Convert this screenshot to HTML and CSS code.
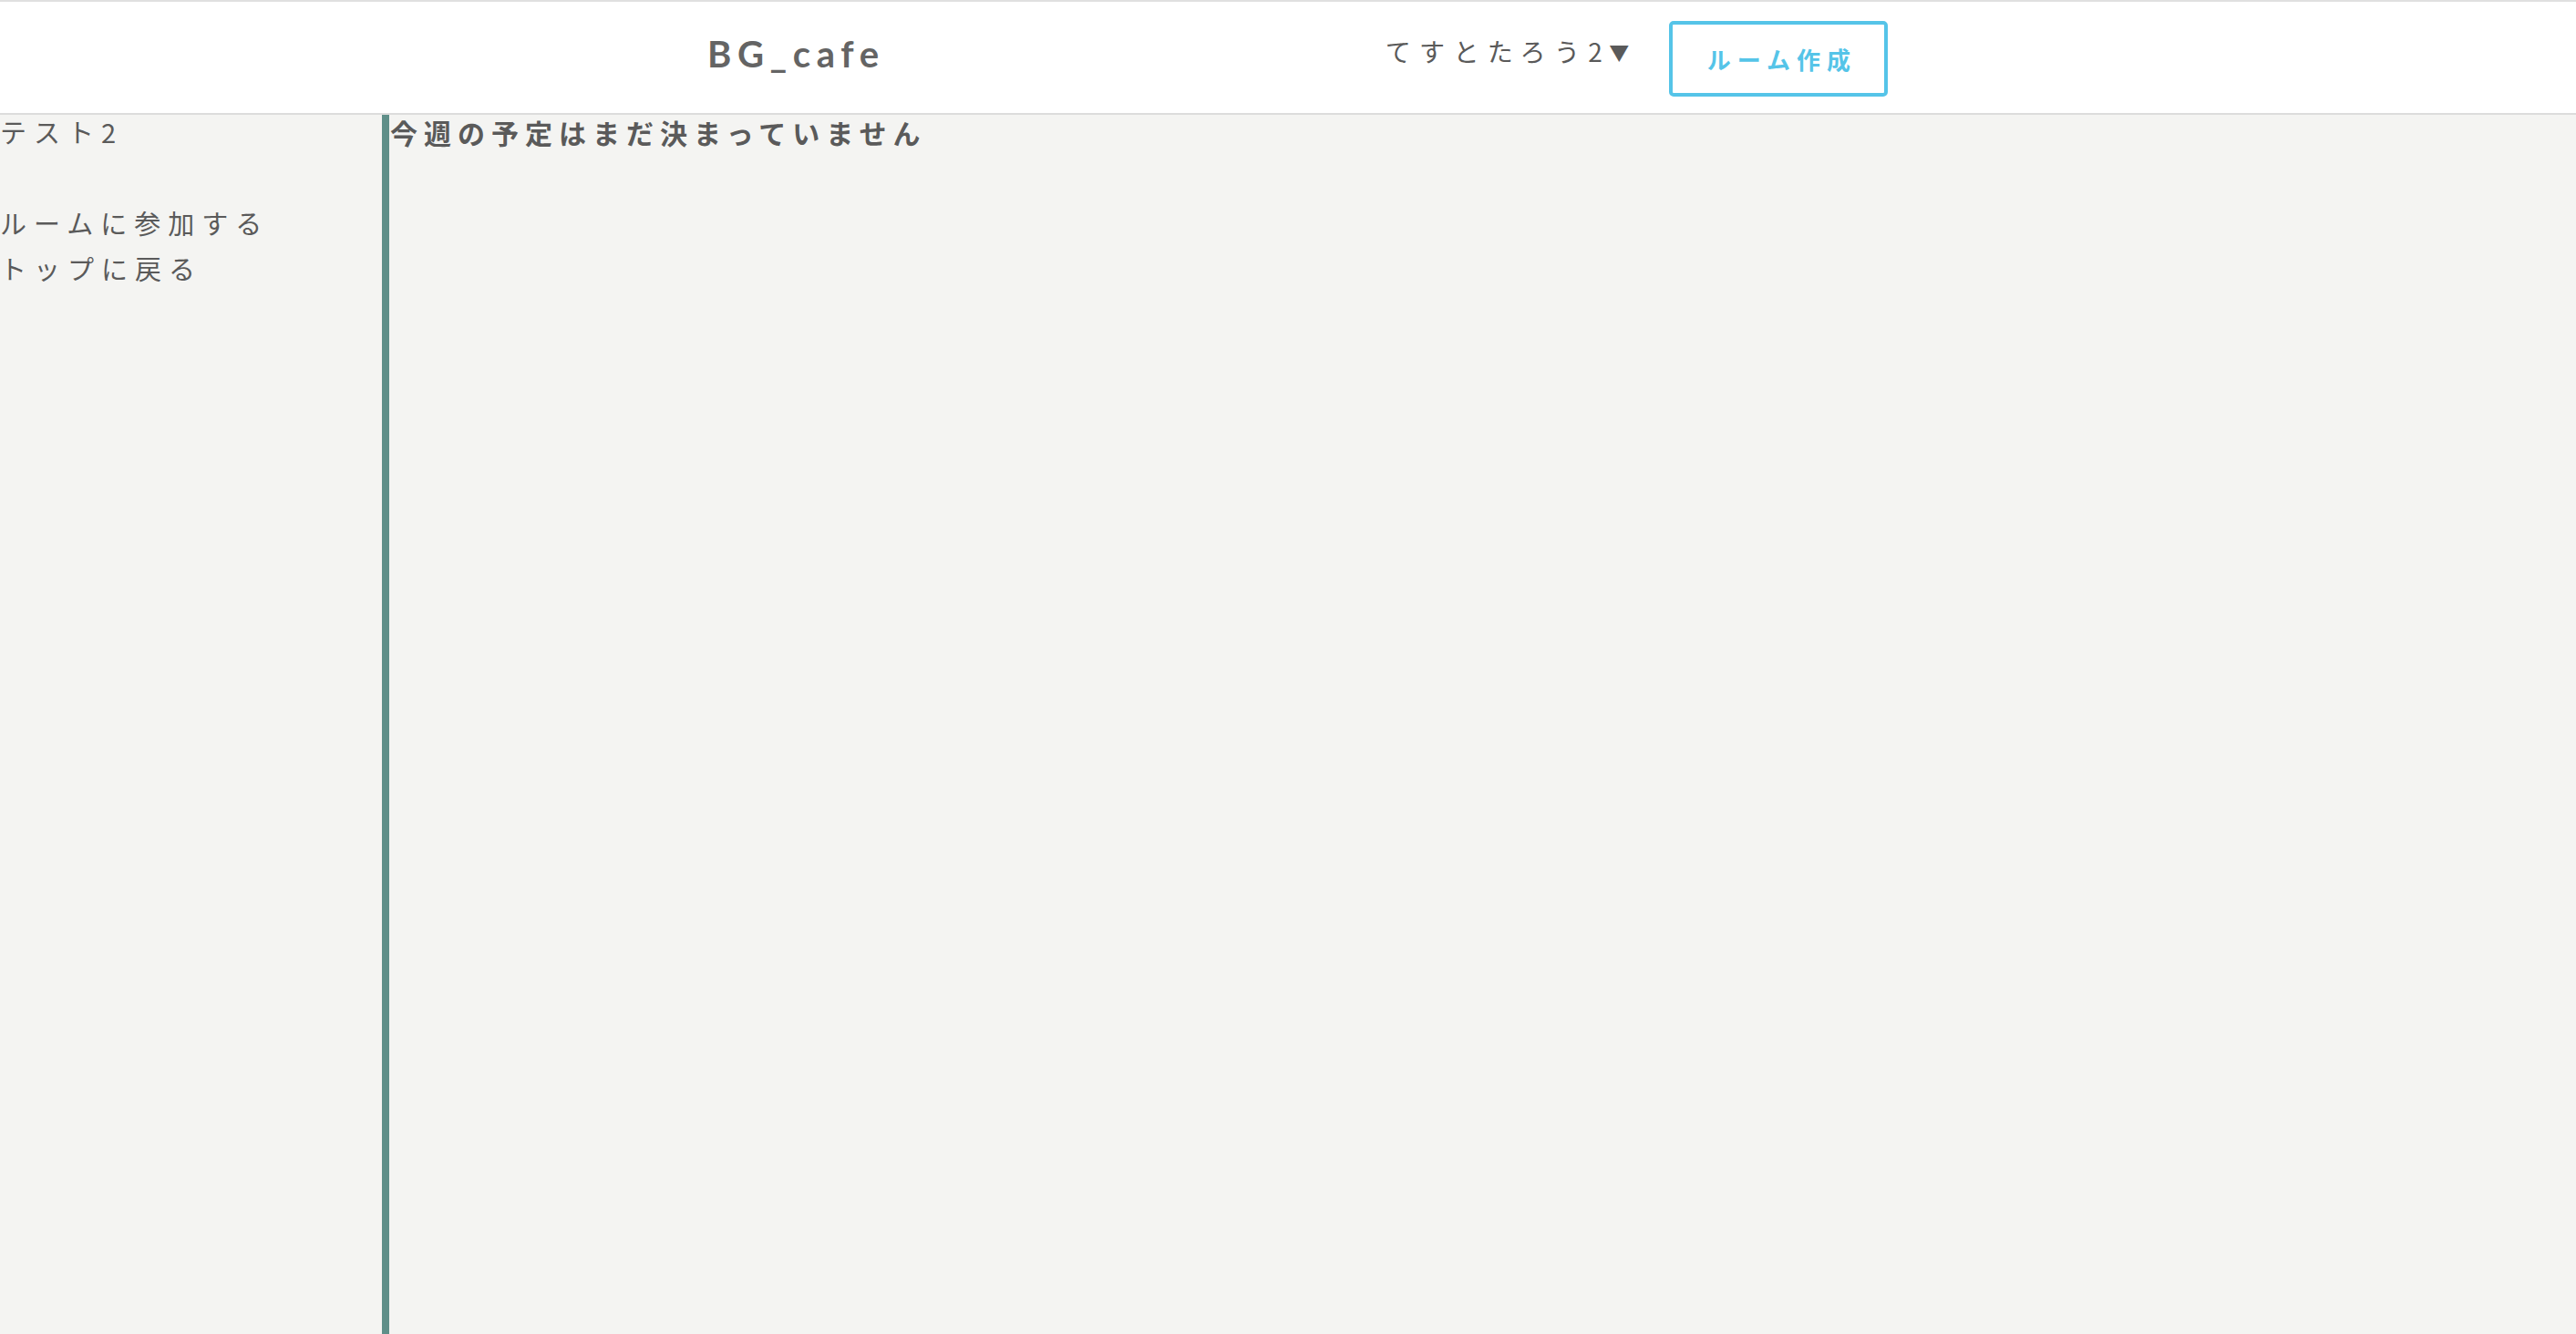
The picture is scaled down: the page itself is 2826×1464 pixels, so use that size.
FILE: index.html
```html
<!DOCTYPE html>
<html lang="ja">
<head>
<meta charset="utf-8">
<title>BG_cafe</title>
<link rel="stylesheet" href="styles.css">
</head>
<body>
<header class="header">
  <div class="logo">BG_cafe</div>
  <div class="header-right">
    <div class="user">てすとたろう2<span class="caret">▼</span></div>
    <button class="create-btn">ルーム作成</button>
  </div>
</header>
<div class="page">
  <aside class="sidebar">
    <div class="room-name">テスト2</div>
    <div class="side-links">
      <a class="side-link">ルームに参加する</a>
      <a class="side-link">トップに戻る</a>
    </div>
  </aside>
  <main class="main">
    <h2 class="notice">今週の予定はまだ決まっていません</h2>
  </main>
</div>
</body>
</html>
```

FILE: styles.css
```css
* { box-sizing: border-box; }
html, body { height: 100%; }
body {
  margin: 0;
  background: #f4f4f2;
  color: #5c5c5c;
  font-family: "Noto Sans CJK JP", "Noto Sans", sans-serif;
  display: flex;
  flex-direction: column;
}
.header {
  height: 126px;
  background: #fff;
  border-top: 2px solid #e0e0e0;
  border-bottom: 2px solid #dcdcdc;
  display: flex;
  align-items: center;
  padding-left: 776px;
  flex-shrink: 0;
}
.logo {
  font-family: "Lato", "Noto Sans", sans-serif;
  font-weight: 700;
  font-size: 40px;
  letter-spacing: 0.165em;
  color: #646464;
  margin-top: -8px;
}
.header-right {
  display: flex;
  align-items: center;
  margin-left: 549px;
}
.user {
  font-size: 28px;
  letter-spacing: 9.4px;
  color: #5a5a5a;
  margin-top: -14px;
}
.caret { font-size: 22px; letter-spacing: 0; margin-left: -2px; position: relative; top: -2px; }
.create-btn {
  margin-left: 44px;
  width: 240px;
  height: 83px;
  background: #fff;
  border: 4px solid #55c4e8;
  border-radius: 5px;
  color: #55c4e8;
  font-family: "Noto Sans CJK JP", sans-serif;
  font-weight: 700;
  font-size: 26px;
  letter-spacing: 7px;
  padding: 0 0 0 7px;
  margin-top: 2px;
}
.page {
  flex: 1;
  display: flex;
}
.sidebar {
  width: 419px;
  flex-shrink: 0;
  font-size: 29px;
  letter-spacing: 8px;
  line-height: 50px;
  color: #5a5a5a;
}
.room-name { line-height: 36px; }
.side-links {
  display: flex;
  flex-direction: column;
  margin-top: 57px;
}
.side-link { display: block; }
.main {
  flex: 1;
  border-left: 8px solid #5f8f89;
}
.notice {
  margin: 0;
  padding: 0 0 0 1px;
  font-size: 30px;
  font-weight: 700;
  letter-spacing: 7px;
  line-height: 38px;
  color: #5a5a5a;
}
```
